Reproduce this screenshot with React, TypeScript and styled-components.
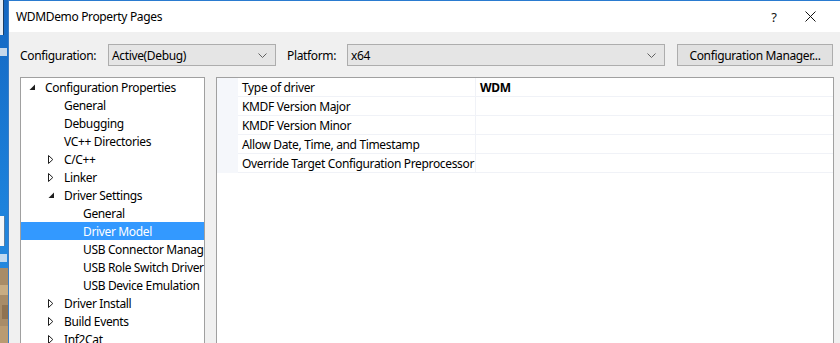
import styled, { createGlobalStyle } from "styled-components";

const GlobalStyle = createGlobalStyle`
  html, body {
    margin: 0;
    padding: 0;
    overflow: hidden;
    background: #1a78d4;
  }
  * {
    box-sizing: border-box;
  }
`;

type TreeNode = {
  label: string;
  level: number;
  arrow?: "open" | "closed";
  selected?: boolean;
};

const treeItems: TreeNode[] = [
  { label: "Configuration Properties", level: 0, arrow: "open" },
  { label: "General", level: 1 },
  { label: "Debugging", level: 1 },
  { label: "VC++ Directories", level: 1 },
  { label: "C/C++", level: 1, arrow: "closed" },
  { label: "Linker", level: 1, arrow: "closed" },
  { label: "Driver Settings", level: 1, arrow: "open" },
  { label: "General", level: 2 },
  { label: "Driver Model", level: 2, selected: true },
  { label: "USB Connector Manag", level: 2 },
  { label: "USB Role Switch Driver", level: 2 },
  { label: "USB Device Emulation", level: 2 },
  { label: "Driver Install", level: 1, arrow: "closed" },
  { label: "Build Events", level: 1, arrow: "closed" },
  { label: "Inf2Cat", level: 1, arrow: "closed" },
];

const properties = [
  { name: "Type of driver", value: "WDM" },
  { name: "KMDF Version Major", value: "" },
  { name: "KMDF Version Minor", value: "" },
  { name: "Allow Date, Time, and Timestamp", value: "" },
  { name: "Override Target Configuration Preprocessor", value: "" },
];

const ChevronDown = () => (
  <svg width="9" height="5" viewBox="0 0 9 5">
    <polyline points="0.5,0.5 4.5,4.5 8.5,0.5" fill="none" stroke="#606060" strokeWidth="1" />
  </svg>
);

const Arrow = ({ kind }: { kind?: "open" | "closed" }) => {
  if (kind === "open") {
    return (
      <svg width="7" height="7" viewBox="0 0 7 7">
        <polygon points="6,0.5 6,6 0.5,6" fill="#1e1e1e" />
      </svg>
    );
  }
  if (kind === "closed") {
    return (
      <svg width="6" height="9" viewBox="0 0 6 9">
        <polygon points="0.5,0.5 4.8,4.5 0.5,8.5" fill="none" stroke="#1e1e1e" strokeWidth="1" />
      </svg>
    );
  }
  return null;
};

const CloseIcon = () => (
  <svg width="11" height="11" viewBox="0 0 11 11">
    <line x1="0.5" y1="0.5" x2="10.5" y2="10.5" stroke="#111" strokeWidth="1" />
    <line x1="10.5" y1="0.5" x2="0.5" y2="10.5" stroke="#111" strokeWidth="1" />
  </svg>
);

const DesktopStrip = () => (
  <svg width="8" height="343" viewBox="0 0 8 343">
    <defs>
      <linearGradient id="sky" x1="0" y1="0" x2="0" y2="1">
        <stop offset="0" stopColor="#1467c2" />
        <stop offset="0.6" stopColor="#1d82dc" />
        <stop offset="1" stopColor="#2a8ee0" />
      </linearGradient>
    </defs>
    <rect x="0" y="0" width="8" height="343" fill="url(#sky)" />
    <rect x="0" y="0" width="3" height="35" fill="#e8eef5" />
    <rect x="3" y="0" width="1" height="35" fill="#1c3f66" />
    <rect x="0" y="48" width="7" height="8" fill="#f2f2f2" opacity="0.8" />
    <rect x="0" y="216" width="4" height="30" fill="#f4f6f8" />
    <rect x="4" y="216" width="1" height="30" fill="#5a7da0" />
    <rect x="0" y="254" width="7" height="8" fill="#e8eef4" opacity="0.8" />
    <rect x="0" y="268" width="8" height="75" fill="#a88c68" />
    <rect x="0" y="285" width="8" height="10" fill="#c8ad84" />
    <rect x="2" y="305" width="6" height="14" fill="#8f7352" />
    <rect x="0" y="326" width="8" height="17" fill="#b99b72" />
  </svg>
);

const Screen = styled.div`
  display: flex;
  width: 840px;
  height: 343px;
  overflow: hidden;
  font-family: "Segoe UI", "Noto Sans", "Liberation Sans", sans-serif;
  font-size: 12px;
  letter-spacing: -0.35px;
  color: #000;
`;

const Desktop = styled.div`
  width: 8px;
  flex-shrink: 0;
  display: flex;
`;

const Window = styled.div`
  flex: 1;
  display: flex;
  flex-direction: column;
  background: #f0f0f0;
  border-top: 1px solid #2a7bd0;
  border-left: 1px solid #3a7cc4;
  min-width: 0;
`;

const TitleBar = styled.div`
  height: 31px;
  flex-shrink: 0;
  background: #fff;
  display: flex;
  align-items: center;
  padding-left: 7px;
  padding-right: 12px;
`;

const Title = styled.div`
  flex: 1;
  padding-bottom: 1px;
`;

const CaptionButton = styled.div`
  width: 36px;
  height: 31px;
  display: flex;
  align-items: center;
  justify-content: center;
  font-size: 13px;
  color: #111;
`;

const ConfigRow = styled.div`
  display: flex;
  align-items: center;
  height: 22px;
  margin-top: 12px;
  padding-left: 11px;
  flex-shrink: 0;
`;

const Label = styled.div<{ $width: number; $gap?: number }>`
  width: ${(p) => p.$width}px;
  margin-left: ${(p) => p.$gap ?? 0}px;
  flex-shrink: 0;
`;

const Combo = styled.div<{ $width: number }>`
  width: ${(p) => p.$width}px;
  height: 22px;
  flex-shrink: 0;
  background: #e5e5e5;
  border: 1px solid #adadad;
  display: flex;
  align-items: center;
  justify-content: space-between;
  padding: 0 8px 0 3px;
`;

const Button = styled.div`
  width: 156px;
  height: 22px;
  margin-left: 12px;
  flex-shrink: 0;
  background: #e1e1e1;
  border: 1px solid #adadad;
  display: flex;
  align-items: center;
  justify-content: center;
`;

const Body = styled.div`
  display: flex;
  margin-top: 11px;
  padding-left: 11px;
  gap: 11px;
  flex: 1;
  min-height: 0;
`;

const Tree = styled.div`
  width: 185px;
  flex-shrink: 0;
  background: #fff;
  border: 1px solid #a0a0a0;
  border-bottom: none;
  overflow: hidden;
`;

const TreeRow = styled.div<{ $level: number; $selected?: boolean }>`
  height: 18px;
  display: flex;
  align-items: center;
  padding-left: ${(p) => 7 + p.$level * 19}px;
  background: ${(p) => (p.$selected ? "#3399ff" : "transparent")};
  color: ${(p) => (p.$selected ? "#fff" : "#000")};
  white-space: nowrap;
`;

const ArrowBox = styled.div`
  width: 17px;
  flex-shrink: 0;
  display: flex;
  align-items: center;
  padding-left: 1px;
`;

const Grid = styled.div`
  width: 618px;
  flex-shrink: 0;
  background: #fff;
  border: 1px solid #a0a0a0;
  border-bottom: none;
`;

const PropRow = styled.div`
  display: grid;
  grid-template-columns: 21px 237px 1fr;
  height: 19px;
`;

const Margin = styled.div`
  background: #f5f7fb;
`;

const Cell = styled.div<{ $bold?: boolean; $value?: boolean }>`
  display: flex;
  align-items: center;
  padding-left: 4px;
  border-bottom: 1px solid #f0f2f7;
  border-left: ${(p) => (p.$value ? "1px solid #f0f2f7" : "none")};
  font-weight: ${(p) => (p.$bold ? 700 : 400)};
  white-space: nowrap;
  overflow: hidden;
`;

export default function App() {
  return (
    <>
      <GlobalStyle />
      <Screen>
        <Desktop>
          <DesktopStrip />
        </Desktop>
        <Window>
          <TitleBar>
            <Title>WDMDemo Property Pages</Title>
            <CaptionButton>?</CaptionButton>
            <CaptionButton>
              <CloseIcon />
            </CaptionButton>
          </TitleBar>
          <ConfigRow>
            <Label $width={88}>Configuration:</Label>
            <Combo $width={168}>
              <span>Active(Debug)</span>
              <ChevronDown />
            </Combo>
            <Label $width={60} $gap={11}>
              Platform:
            </Label>
            <Combo $width={318}>
              <span>x64</span>
              <ChevronDown />
            </Combo>
            <Button>Configuration Manager...</Button>
          </ConfigRow>
          <Body>
            <Tree>
              {treeItems.map((item, i) => (
                <TreeRow key={i} $level={item.level} $selected={item.selected}>
                  <ArrowBox>
                    <Arrow kind={item.arrow} />
                  </ArrowBox>
                  {item.label}
                </TreeRow>
              ))}
            </Tree>
            <Grid>
              {properties.map((p) => (
                <PropRow key={p.name}>
                  <Margin />
                  <Cell>{p.name}</Cell>
                  <Cell $value $bold>
                    {p.value}
                  </Cell>
                </PropRow>
              ))}
            </Grid>
          </Body>
        </Window>
      </Screen>
    </>
  );
}
